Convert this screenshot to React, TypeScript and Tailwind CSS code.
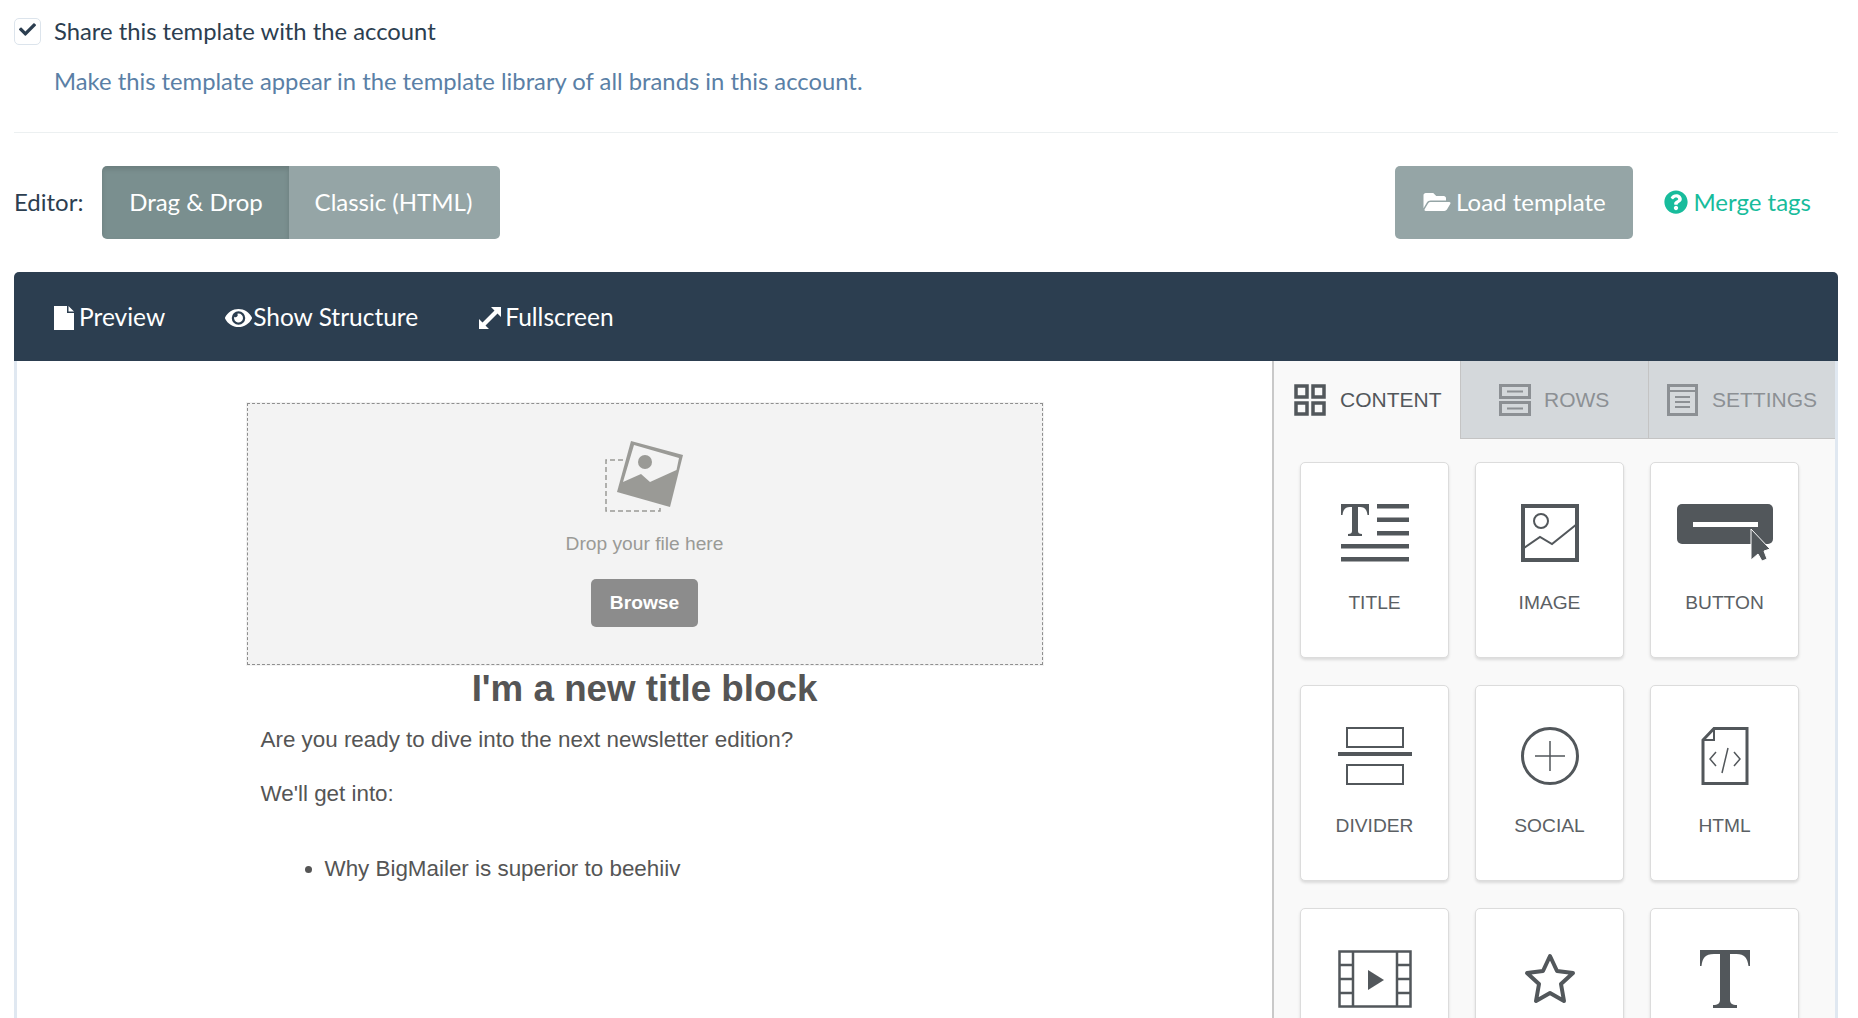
import { FaCheck, FaEye, FaFolderOpen, FaQuestionCircle } from "react-icons/fa"

const sans = "font-['Liberation_Sans',Arial,sans-serif]"

function TitleIcon() {
    return (
        <svg width="68" height="58" viewBox="0 0 68 58" fill="#52575b">
            <path d="M0 0h28v11h-1.500c-.5-5-2.500-8-7.500-8h-2v24c0 2 1 3 4 3v2H7v-2c3 0 4-1 4-3V3H9C4 3 2 6 1.500 11H0z" />
            <rect x="36" y="0" width="32" height="4.500" />
            <rect x="36" y="13.500" width="32" height="4.500" />
            <rect x="36" y="27" width="32" height="4.500" />
            <rect x="0" y="40" width="68" height="4.500" />
            <rect x="0" y="53" width="68" height="4.500" />
        </svg>
    )
}

function ImageIcon() {
    return (
        <svg width="58" height="58" viewBox="0 0 58 58" fill="none" stroke="#52575b">
            <rect x="2" y="2" width="54" height="54" strokeWidth="4" />
            <circle cx="20" cy="17" r="7" strokeWidth="2" />
            <path d="M3 44l16-11 12 7 25-20" strokeWidth="2" />
        </svg>
    )
}

function ButtonIcon() {
    return (
        <svg width="96" height="58" viewBox="0 0 96 58" overflow="visible">
            <rect x="0" y="0" width="96" height="40" rx="5" fill="#52575b" />
            <rect x="16" y="18" width="65" height="5" fill="#fff" />
            <path d="M74 25V56L81 50L85 57L90 55L87 47L93 45z" fill="#52575b" stroke="#fff" strokeWidth="1" />
        </svg>
    )
}

function DividerIcon() {
    return (
        <svg width="74" height="58" viewBox="0 0 74 58" fill="none" stroke="#52575b">
            <rect x="9" y="1" width="56" height="19" strokeWidth="2" />
            <rect x="0" y="25" width="74" height="4" fill="#52575b" stroke="none" />
            <rect x="9" y="38" width="56" height="19" strokeWidth="2" />
        </svg>
    )
}

function SocialIcon() {
    return (
        <svg width="58" height="58" viewBox="0 0 58 58" fill="none" stroke="#52575b">
            <circle cx="29" cy="29" r="27.500" strokeWidth="3" />
            <path d="M29 14v30M14 29h30" strokeWidth="1.500" />
        </svg>
    )
}

function HtmlIcon() {
    return (
        <svg width="48" height="58" viewBox="0 0 48 58" fill="none" stroke="#52575b">
            <path d="M13 1.500h33v55H2V13z" strokeWidth="3" />
            <path d="M13 2v11H2" strokeWidth="2" />
            <path d="M15 25l-6 7 6 7M33 25l6 7-6 7M27 21l-6 25" strokeWidth="1.500" />
        </svg>
    )
}

function VideoIcon() {
    return (
        <svg width="74" height="58" viewBox="0 0 74 58" fill="none" stroke="#52575b" strokeWidth="2.500">
            <rect x="1.500" y="1.500" width="71" height="55" />
            <path d="M15 2v54M59 2v54M2 15h13M2 29h13M2 43h13M59 15h13M59 29h13M59 43h13" />
            <path d="M30 20v20l16-10z" fill="#52575b" stroke="none" />
        </svg>
    )
}

function StarIcon() {
    return (
        <svg width="52" height="52" viewBox="0 0 52 52" fill="none" stroke="#52575b" strokeWidth="4" strokeLinejoin="round">
            <path d="M26 3l7 15 16 2-12 11 3 17-14-8-14 8 3-17L3 20l16-2z" />
        </svg>
    )
}

function BigTIcon() {
    return (
        <svg width="50" height="58" viewBox="0 0 50 58" fill="#52575b">
            <path d="M0 0h50v16h-1.500c-1-8-4-12-12-12H30v46c0 3 2 5 7 5v3H13v-3c5 0 7-2 7-5V4h-6C5 4 2.500 8 1.500 16H0z" />
        </svg>
    )
}

const blocks = [
    { label: "TITLE", icon: <TitleIcon /> },
    { label: "IMAGE", icon: <ImageIcon /> },
    { label: "BUTTON", icon: <ButtonIcon /> },
    { label: "DIVIDER", icon: <DividerIcon /> },
    { label: "SOCIAL", icon: <SocialIcon /> },
    { label: "HTML", icon: <HtmlIcon /> },
    { label: "", icon: <VideoIcon /> },
    { label: "", icon: <StarIcon /> },
    { label: "", icon: <BigTIcon /> },
]

function BlockCard({ label, icon }: { label: string; icon: React.ReactNode }) {
    return (
        <div className="h-[196px] flex flex-col items-center rounded-[5px] border border-[#dcdcdc] bg-white pt-[41px] shadow-[0_2px_3px_rgba(0,0,0,0.12)]">
            <div className="h-[58px] flex items-center justify-center">{icon}</div>
            <span className="mt-[29px] text-[19.200px] leading-[24px] text-[#5b6064]">{label}</span>
        </div>
    )
}

function Dropzone() {
    return (
        <div className="w-[798px] h-[264px] mx-auto bg-[#f3f3f3] p-px">
            <div className="h-full border border-dashed border-[#8f8f8f] flex flex-col items-center pt-[35px]">
                <svg width="82" height="74" viewBox="14 9 82 74" fill="none">
                    <path d="M33 30H16V81H70V78" stroke="#9a9a96" strokeWidth="1.500" strokeDasharray="5 3" />
                    <path d="M41 11L93 25L80 77L27 62z" fill="#9a9a96" />
                    <path d="M44 15L89 28L86.500 40L60 52L51 44L33 52z" fill="#f3f3f3" />
                    <circle cx="55" cy="32" r="7" fill="#9a9a96" />
                </svg>
                <p className="mt-[19px] text-[19.200px] leading-[24px] text-[#9a9a96]">Drop your file here</p>
                <button className="mt-[23px] w-[107px] h-[48px] rounded-[5px] bg-[#8c8c8c] text-white font-bold text-[19.200px]">
                    Browse
                </button>
            </div>
        </div>
    )
}

export default function App() {
    return (
        <div className="h-[1018px] overflow-hidden bg-white pl-[14px] pr-[20px] font-['Lato',sans-serif] text-[24px] text-[#2c3e50]">
            <div className="flex items-center gap-[13px] pt-[14px]">
                <div className="w-[27px] h-[27px] rounded-[5px] border border-[#dce4ec] flex items-center justify-center">
                    <FaCheck className="w-[17px] h-[17px] text-[#2c3e50] mb-[4px]" />
                </div>
                <span className="text-[23.800px] leading-[34px]">Share this template with the account</span>
            </div>
            <p className="mt-[15px] pl-[40px] text-[23.800px] leading-[36px] text-[#5a7fa6]">
                Make this template appear in the template library of all brands in this account.
            </p>
            <div className="mt-[33px] h-px bg-[#ecf0f1]" />

            <div className="mt-[33px] h-[73px] flex items-center">
                <span className="mr-[19px] pb-[2px]">Editor:</span>
                <div className="flex h-full rounded-[5px] overflow-hidden text-white">
                    <div className="w-[187px] pb-[2px] flex items-center justify-center bg-[#7a8f8f] shadow-[inset_0_3px_5px_rgba(0,0,0,0.125)]">
                        Drag &amp; Drop
                    </div>
                    <div className="w-[211px] pb-[2px] pr-[3px] flex items-center justify-center bg-[#95a5a6]">Classic (HTML)</div>
                </div>
                <div className="ml-auto w-[238px] h-full pb-[2px] rounded-[5px] bg-[#95a5a6] text-white flex items-center justify-center gap-[5px]">
                    <FaFolderOpen className="w-[28px] h-[24px]" />
                    Load template
                </div>
                <div className="ml-[31px] mr-[27px] pb-[2px] flex items-center gap-[5px] text-[#18bc9c]">
                    <FaQuestionCircle className="w-[24px] h-[24px]" />
                    Merge tags
                </div>
            </div>

            <div className="mt-[33px] h-[89px] pt-[2px] rounded-t-[5px] bg-[#2c3e50] text-white text-[24.500px] flex items-center pl-[40px]">
                <div className="flex items-center gap-[5px]">
                    <svg width="20" height="24" viewBox="0 0 20 24" fill="#fff">
                        <path d="M0 0h13v7h7v17H0zM14.500 0L20 5.500h-5.500z" />
                    </svg>
                    Preview
                </div>
                <div className="ml-[59px] flex items-center">
                    <FaEye className="w-[29px] h-[24px]" />
                    Show Structure
                </div>
                <div className="ml-[61px] flex items-center gap-[4px]">
                    <svg width="22" height="22" viewBox="0 0 22 22" fill="#fff">
                        <path d="M12 0h10v10l-3.500-3.500L6.500 18.500 10 22H0V12l3.500 3.500L15.500 3.500z" />
                    </svg>
                    Fullscreen
                </div>
            </div>

            <div className={`h-[657px] flex border-x-[3px] border-[#e0e8f1] ${sans}`}>
                <div className="flex-1 min-w-0 pt-[41px] text-[#555]">
                    <Dropzone />
                    <h1 className="text-[36.750px] leading-[44px] font-bold text-center text-[#555] mt-[1px]">I'm a new title block</h1>
                    <div className="w-[798px] mx-auto px-[15px] text-[22.400px] leading-[30px]">
                        <p className="mt-[14px]">Are you ready to dive into the next newsletter edition?</p>
                        <p className="mt-[24px]">We'll get into:</p>
                        <ul className="mt-[45px] pl-[64px] list-disc">
                            <li>Why BigMailer is superior to beehiiv</li>
                        </ul>
                    </div>
                </div>

                <div className="w-[563px] shrink-0 bg-[#f9f9f9] border-l-2 border-[#c9c9c9] flex flex-col">
                    <div className="h-[78px] shrink-0 flex text-[21px]">
                        <div className="w-[186px] flex items-center gap-[14px] pl-[20px] text-[#52575b]">
                            <svg width="32" height="32" viewBox="0 0 32 32" fill="none" stroke="#52575b" strokeWidth="3.500">
                                <rect x="2" y="2" width="11" height="11" />
                                <rect x="19" y="2" width="11" height="11" />
                                <rect x="2" y="19" width="11" height="11" />
                                <rect x="19" y="19" width="11" height="11" />
                            </svg>
                            CONTENT
                        </div>
                        <div className="w-[188px] flex items-center gap-[13px] pl-[38px] bg-[#d4d8db] border-l border-b border-[#c4c4c4] text-[#8c9094]">
                            <svg width="32" height="32" viewBox="0 0 32 32" fill="none" stroke="#8c9094">
                                <rect x="1.500" y="1.500" width="29" height="12" strokeWidth="3" />
                                <rect x="1.500" y="18.500" width="29" height="12" strokeWidth="3" />
                                <path d="M8 7.500h16M8 24.500h16" strokeWidth="2" />
                            </svg>
                            ROWS
                        </div>
                        <div className="flex-1 flex items-center gap-[14px] pl-[18px] bg-[#d4d8db] border-l border-b border-[#c4c4c4] text-[#8c9094]">
                            <svg width="31" height="32" viewBox="0 0 31 32" fill="none" stroke="#8c9094">
                                <rect x="1.500" y="1.500" width="28" height="29" strokeWidth="3" />
                                <path d="M2 7h27" strokeWidth="2" />
                                <path d="M8 13h15M8 18h15M8 23h15" strokeWidth="2" />
                            </svg>
                            SETTINGS
                        </div>
                    </div>
                    <div className="grid grid-cols-[149px_149px_149px] gap-x-[26px] gap-y-[27px] pt-[23px] pl-[26px]">
                        {blocks.map((b, i) => (
                            <BlockCard key={i} label={b.label} icon={b.icon} />
                        ))}
                    </div>
                </div>
            </div>
        </div>
    )
}
